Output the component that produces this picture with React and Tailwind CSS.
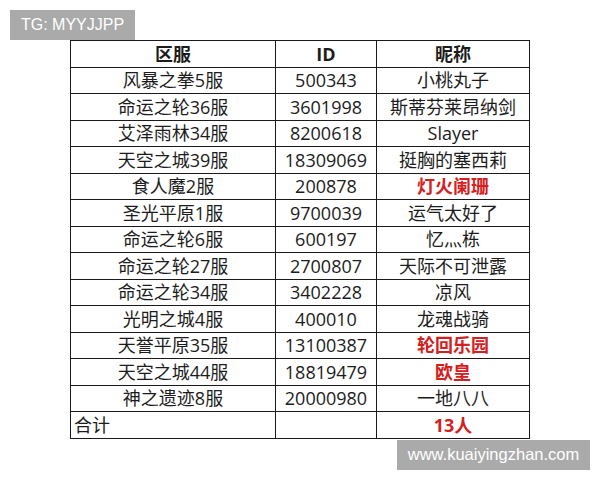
import React from "react";

const rows = [
  ["风暴之拳5服", "500343", "小桃丸子", false],
  ["命运之轮36服", "3601998", "斯蒂芬莱昂纳剑", false],
  ["艾泽雨林34服", "8200618", "Slayer", false],
  ["天空之城39服", "18309069", "挺胸的塞西莉", false],
  ["食人魔2服", "200878", "灯火阑珊", true],
  ["圣光平原1服", "9700039", "运气太好了", false],
  ["命运之轮6服", "600197", "忆灬栋", false],
  ["命运之轮27服", "2700807", "天际不可泄露", false],
  ["命运之轮34服", "3402228", "凉风", false],
  ["光明之城4服", "400010", "龙魂战骑", false],
  ["天誉平原35服", "13100387", "轮回乐园", true],
  ["天空之城44服", "18819479", "欧皇", true],
  ["神之遗迹8服", "20000980", "一地八八", false],
];

const cell = "border border-[#1a1a1a] h-[26.5px] p-0 text-center align-middle leading-none whitespace-nowrap";

export default function App() {
  return (
    <div
      className="w-[600px] h-[480px] bg-white overflow-hidden flex flex-col"
      style={{ fontFamily: '"Open Sans", "Noto Sans CJK SC", sans-serif' }}
    >
      <div className="ml-[10px] mt-[10px] w-[125px] h-[30px] bg-[#aaaaaa] text-white text-[16px] flex items-center justify-center leading-none font-['Liberation_Sans',sans-serif]">
        TG: MYYJJPP
      </div>
      <table className="ml-[70px] border-collapse text-[18px] text-[#1c1c1c] table-fixed w-[459px]">
        <colgroup>
          <col className="w-[205px]" />
          <col className="w-[101px]" />
          <col className="w-[153px]" />
        </colgroup>
        <tbody>
          <tr>
            <td className={cell + " font-bold h-[25px]"}>区服</td>
            <td className={cell + " font-bold"}>ID</td>
            <td className={cell + " font-bold"}>昵称</td>
          </tr>
          {rows.map((r, i) => (
            <tr key={i}>
              <td className={cell}>{r[0]}</td>
              <td className={cell}>{r[1]}</td>
              <td className={cell + (r[3] ? " font-bold text-[#d42020]" : "")}>{r[2]}</td>
            </tr>
          ))}
          <tr>
            <td className={cell + " text-left pl-[3px]"}>合计</td>
            <td className={cell}></td>
            <td className={cell + " font-bold text-[#d42020]"}>13人</td>
          </tr>
        </tbody>
      </table>
      <div className="ml-[397px] mt-[1px] w-[193px] h-[30px] bg-[#aaaaaa] text-white text-[16.5px] flex items-center justify-center leading-none font-['Liberation_Sans',sans-serif]">
        www.kuaiyingzhan.com
      </div>
    </div>
  );
}
